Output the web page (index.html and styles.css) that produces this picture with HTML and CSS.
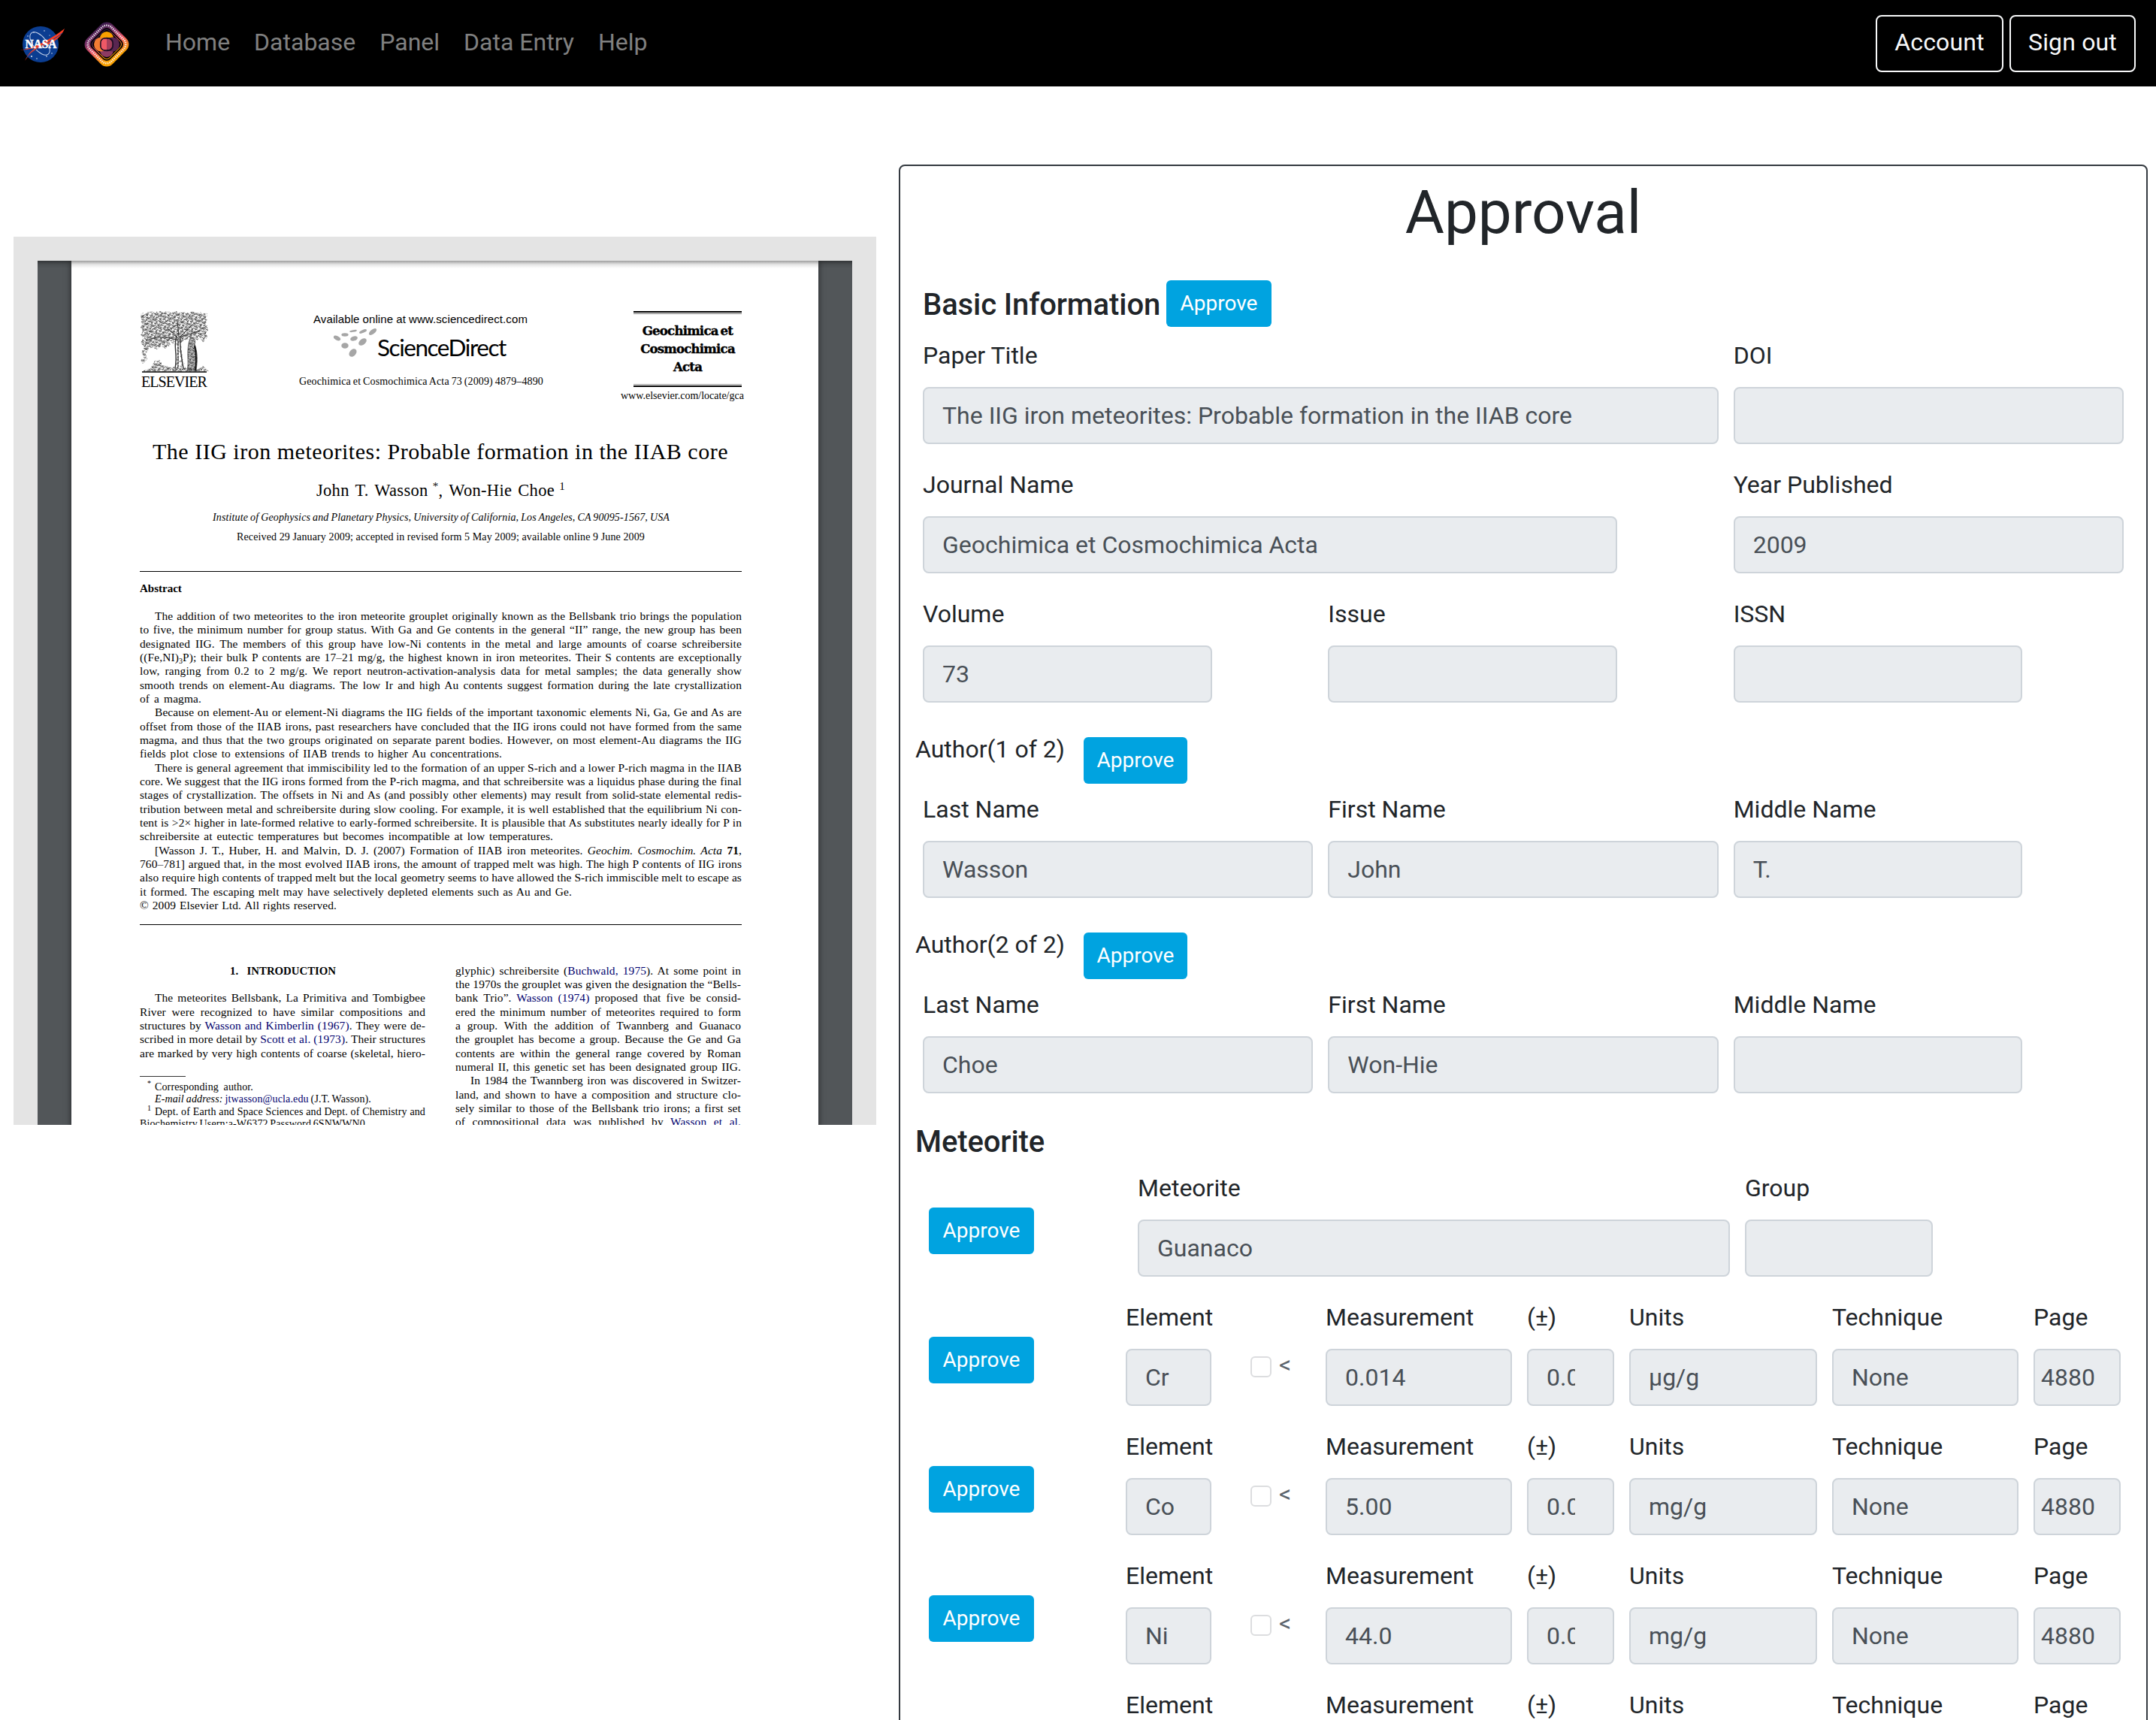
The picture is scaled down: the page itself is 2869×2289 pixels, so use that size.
FILE: index.html
```html
<!DOCTYPE html>
<html lang="en">
<head>
<meta charset="utf-8">
<title>Approval</title>
<link rel="stylesheet" href="styles.css">
</head>
<body>
<nav class="navbar">
  <svg class="logo-nasa" viewBox="0 0 60 48">
    <circle cx="28" cy="24" r="24" fill="#0b3d91"/>
    <g fill="#fff"><circle cx="19" cy="8" r=".8"/><circle cx="33" cy="6" r=".7"/><circle cx="11" cy="13" r=".7"/><circle cx="40" cy="12" r=".6"/><circle cx="16" cy="40" r=".9"/><circle cx="23" cy="43" r=".7"/><circle cx="36" cy="40" r=".8"/><circle cx="43" cy="36" r=".7"/></g>
    <ellipse cx="27" cy="23" rx="9" ry="18" transform="rotate(-38 27 23)" fill="none" stroke="#c9d6ee" stroke-width="1"/>
    <path d="M1 31C12 32 38 20 60 3C56 13 49 19 39 24C25 28 15 34 7 46C12 35 18 30 25 27C16 30 8 32 1 31Z" fill="#fc3d21"/>
    <path d="M9 42C20 28 44 20 57 9" fill="none" stroke="#0b3d91" stroke-width="1"/>
    <text x="28.500" y="29" text-anchor="middle" textLength="42" lengthAdjust="spacingAndGlyphs" class="nasa-word">NASA</text>
  </svg>
  <svg class="logo-psyche" viewBox="0 0 60 60">
    <defs>
      <linearGradient id="ring" x1="0" y1="0" x2="1" y2=".3"><stop offset="0" stop-color="#2b1745"/><stop offset=".35" stop-color="#7d3268"/><stop offset=".62" stop-color="#ef5966"/><stop offset="1" stop-color="#f9a000"/></linearGradient>
    </defs>
    <rect x="6" y="6" width="48" height="48" rx="11" transform="rotate(45 30 30)" fill="url(#ring)"/>
    <rect x="9.500" y="9.500" width="41" height="41" rx="9" transform="rotate(45 30 30)" fill="none" stroke="#fff" stroke-opacity=".85" stroke-width="2.600" stroke-dasharray="1.400 1.300"/>
    <rect x="12.500" y="12.500" width="35" height="35" rx="7" transform="rotate(45 30 30)" fill="#000"/>
    <rect x="14.500" y="14.500" width="31" height="31" rx="6" transform="rotate(45 30 30)" fill="none" stroke="url(#ring)" stroke-width="1"/>
    <circle cx="30" cy="22" r="9" fill="#f9a000"/><circle cx="30" cy="38" r="9" fill="#8d3a63"/>
    <circle cx="22.500" cy="30" r="9.500" fill="#f47c33"/><circle cx="37.500" cy="30" r="9.500" fill="#592651"/>
    <circle cx="30" cy="30" r="8.500" fill="#a53f5b" stroke="#1b0d24" stroke-width="1.300"/>
    <path d="M30 21.500a8.500 8.500 0 0 0 0 17Z" fill="#ef5966"/>
    <rect x="22" y="22" width="16" height="16" rx="5" fill="none" stroke="#1b0d24" stroke-width="1.300"/>
  </svg>
  <div class="links"><a>Home</a><a>Database</a><a>Panel</a><a>Data Entry</a><a>Help</a></div>
  <div class="account"><button class="btn-outline">Account</button><button class="btn-outline signout">Sign out</button></div>
</nav>
<main class="content">
  <section class="viewer">
    <div class="viewer-inner">
      <article class="page">
        <header class="masthead">
          <div class="elsevier">
            <svg class="tree" viewBox="0 0 92 82">
              <defs>
                <pattern id="leaf" width="9" height="8" patternUnits="userSpaceOnUse" patternTransform="rotate(17)"><path d="M0 1l2 2M3 0l-1 4M5 1l2 1l1-2M1 6l3-1M5 4l1 3M8 4l-2 1M3 7l2-1M7 7l2-1M0 4l1 1" stroke="#222" stroke-width=".9" fill="none"/></pattern>
                <pattern id="leaf2" width="7" height="11" patternUnits="userSpaceOnUse" patternTransform="rotate(-31)"><path d="M1 2q2 1 1 3M5 1q-2 2 0 3M3 7l2 2M0 9l2-2M6 7v3" stroke="#333" stroke-width=".9" fill="none"/></pattern>
              </defs>
              <path d="M2 3L6 5L10 1L14 4L18 1L23 3L28 0L33 3L38 1L43 3L48 0L54 3L60 1L65 3L70 0L75 3L80 1L85 4L90 3L87 8L90 12L87 17L91 24L88 29L90 35L84 42L80 36L76 39L70 34L64 38L60 36L54 42L46 38L38 42L37 48L33 50L29 46L22 52L18 48L12 50L8 57L10 64L4 70L1 66L5 60L2 54L6 48L1 42L6 36L1 32L4 27L1 22L4 16L1 11Z" fill="url(#leaf)"/>
              <path d="M2 3L10 1L28 0L60 2L90 3L88 14L91 24L89 35L70 34L54 42L37 48L12 47L4 60L5 48L1 38L6 32L1 22Z" fill="url(#leaf2)"/>
              <g fill="none" stroke="#333" stroke-linecap="round"><path d="M49 34C44 48 51 56 47 76M54 34C53 48 55 58 58 76" stroke-width="1.400"/><path d="M51 36L36 22M52 34L50 14M53 35L68 20M48 38C36 35 24 32 10 39M55 34L78 27" stroke-width="1"/><path d="M51 40v34" stroke-width="1.500" stroke-dasharray="2 2"/></g>
              <path d="M48 40h8c-2 12 2 25 6 38h-16c4-12 4-26 2-38Z" fill="url(#leaf2)"/>
              <path d="M67 36c5-3 8 3 6 8c4 10 4 22 2 35h-12c3-12-2-26 4-43Z" fill="#bbb"/><path d="M67 36c5-3 8 3 6 8c4 10 4 22 2 35h-12c3-12-2-26 4-43Z" fill="url(#leaf)" stroke="#222" stroke-width=".6"/>
              <path d="M73 46c3 12 2 22 1 33" stroke="#111" stroke-width="1.800" fill="none"/>
              <path d="M3 80L14 76L20 66L27 65L30 72L40 74L60 76L78 78L84 73L92 80Z" fill="url(#leaf)"/><path d="M3 81L16 77L22 70L27 68L30 75L60 76L84 75L92 81Z" fill="url(#leaf2)"/>
              <path d="M3 81H89" stroke="#000" stroke-width="1.600"/>
            </svg>
            <span class="elsevier-word">ELSEVIER</span>
          </div>
          <div class="direct">
            <p class="line available">Available online at www.sciencedirect.com</p>
            <div class="sd">
              <svg class="dots" viewBox="0 0 58 38" fill="#a6a6a6"><ellipse cx="4.500" cy="13" rx="5" ry="2.700" transform="rotate(25 4.500 13)"/><ellipse cx="15" cy="8.500" rx="4.600" ry="2.200"/><ellipse cx="26" cy="3.500" rx="5" ry="1.300" transform="rotate(-10 26 3.500)"/><ellipse cx="39" cy="4" rx="5.300" ry="2" transform="rotate(-22 39 4)"/><ellipse cx="52" cy="4.500" rx="6" ry="3" transform="rotate(-38 52 4.500)"/><ellipse cx="27" cy="13.500" rx="5" ry="3" transform="rotate(-18 27 13.500)"/><ellipse cx="38.500" cy="18" rx="6" ry="3.800" transform="rotate(-38 38.500 18)"/><ellipse cx="15" cy="23" rx="4.700" ry="3.800"/><ellipse cx="25.500" cy="32.500" rx="6" ry="4.200" transform="rotate(-50 25.500 32.500)"/></svg>
              <span class="sd-word">ScienceDirect</span>
            </div>
            <p class="line citation">Geochimica et Cosmochimica Acta 73 (2009) 4879–4890</p>
          </div>
          <div class="gca">
            <div class="gca-box"><span>Geochimica et</span><span>Cosmochimica</span><span>Acta</span></div>
            <p class="gca-url">www.elsevier.com/locate/gca</p>
          </div>
        </header>
        <h1 class="line paper-title">The IIG iron meteorites: Probable formation in the IIAB core</h1>
        <p class="line authors">John T. Wasson<sup> *</sup>, Won-Hie Choe<sup> 1</sup></p>
        <p class="line institute">Institute of Geophysics and Planetary Physics, University of California, Los Angeles, CA 90095-1567, USA</p>
        <p class="line received">Received 29 January 2009; accepted in revised form 5 May 2009; available online 9 June 2009</p>
        <div class="rule rule-top"></div>
        <h2 class="abstract-head">Abstract</h2>
        <div class="abstract">
          <p class="line indent">The addition of two meteorites to the iron meteorite grouplet originally known as the Bellsbank trio brings the population</p>
          <p class="line">to five, the minimum number for group status. With Ga and Ge contents in the general “II” range, the new group has been</p>
          <p class="line">designated IIG. The members of this group have low-Ni contents in the metal and large amounts of coarse schreibersite</p>
          <p class="line">((Fe,NI)<sub>3</sub>P); their bulk P contents are 17–21 mg/g, the highest known in iron meteorites. Their S contents are exceptionally</p>
          <p class="line">low, ranging from 0.2 to 2 mg/g. We report neutron-activation-analysis data for metal samples; the data generally show</p>
          <p class="line">smooth trends on element-Au diagrams. The low Ir and high Au contents suggest formation during the late crystallization</p>
          <p class="line w-82">of a magma.</p>
          <p class="line indent">Because on element-Au or element-Ni diagrams the IIG fields of the important taxonomic elements Ni, Ga, Ge and As are</p>
          <p class="line">offset from those of the IIAB irons, past researchers have concluded that the IIG irons could not have formed from the same</p>
          <p class="line">magma, and thus that the two groups originated on separate parent bodies. However, on most element-Au diagrams the IIG</p>
          <p class="line w-482">fields plot close to extensions of IIAB trends to higher Au concentrations.</p>
          <p class="line indent">There is general agreement that immiscibility led to the formation of an upper S-rich and a lower P-rich magma in the IIAB</p>
          <p class="line">core. We suggest that the IIG irons formed from the P-rich magma, and that schreibersite was a liquidus phase during the final</p>
          <p class="line">stages of crystallization. The offsets in Ni and As (and possibly other elements) may result from solid-state elemental redis-</p>
          <p class="line">tribution between metal and schreibersite during slow cooling. For example, it is well established that the equilibrium Ni con-</p>
          <p class="line">tent is &gt;2× higher in late-formed relative to early-formed schreibersite. It is plausible that As substitutes nearly ideally for P in</p>
          <p class="line w-550">schreibersite at eutectic temperatures but becomes incompatible at low temperatures.</p>
          <p class="line indent">[Wasson J. T., Huber, H. and Malvin, D. J. (2007) Formation of IIAB iron meteorites. <i>Geochim. Cosmochim. Acta</i> <b>71</b>,</p>
          <p class="line">760–781] argued that, in the most evolved IIAB irons, the amount of trapped melt was high. The high P contents of IIG irons</p>
          <p class="line">also require high contents of trapped melt but the local geometry seems to have allowed the S-rich immiscible melt to escape as</p>
          <p class="line w-575">it formed. The escaping melt may have selectively depleted elements such as Au and Ge.</p>
          <p class="line w-262">© 2009 Elsevier Ltd. All rights reserved.</p>
        </div>
        <div class="rule rule-bottom"></div>
        <div class="columns">
          <div class="column">
            <h2 class="line intro-head">1. INTRODUCTION</h2>
            <div class="intro">
              <p class="line indent">The meteorites Bellsbank, La Primitiva and Tombigbee</p>
              <p class="line">River were recognized to have similar compositions and</p>
              <p class="line">structures by <a>Wasson and Kimberlin (1967)</a>. They were de-</p>
              <p class="line">scribed in more detail by <a>Scott et al. (1973)</a>. Their structures</p>
              <p class="line">are marked by very high contents of coarse (skeletal, hiero-</p>
            </div>
            <div class="footnotes">
              <p class="line note w-131"><sup>*</sup>Corresponding author.</p>
              <p class="line note w-288"><i>E-mail address:</i> <a>jtwasson@ucla.edu</a> (J.T. Wasson).</p>
              <p class="line note w-360"><sup>1</sup>Dept. of Earth and Space Sciences and Dept. of Chemistry and</p>
              <p class="line w-300">Biochemistry Usern:a-W6372 Password 6SNWWN0</p>
            </div>
          </div>
          <div class="column">
            <p class="line">glyphic) schreibersite (<a>Buchwald, 1975</a>). At some point in</p>
            <p class="line">the 1970s the grouplet was given the designation the “Bells-</p>
            <p class="line">bank Trio”. <a>Wasson (1974)</a> proposed that five be consid-</p>
            <p class="line">ered the minimum number of meteorites required to form</p>
            <p class="line">a group. With the addition of Twannberg and Guanaco</p>
            <p class="line">the grouplet has become a group. Because the Ge and Ga</p>
            <p class="line">contents are within the general range covered by Roman</p>
            <p class="line">numeral II, this genetic set has been designated group IIG.</p>
            <p class="line indent">In 1984 the Twannberg iron was discovered in Switzer-</p>
            <p class="line">land, and shown to have a composition and structure clo-</p>
            <p class="line">sely similar to those of the Bellsbank trio irons; a first set</p>
            <p class="line">of compositional data was published by <a>Wasson et al.</a></p>
          </div>
        </div>
      </article>
    </div>
  </section>

  <section class="card">
    <h1 class="card-title">Approval</h1>
    <div class="basic-head"><h2 class="heading">Basic Information</h2><button class="btn">Approve</button></div>
    <div class="row">
      <div class="field c8"><label>Paper Title</label><div class="input">The IIG iron meteorites: Probable formation in the IIAB core</div></div>
      <div class="field c4"><label>DOI</label><div class="input"></div></div>
    </div>
    <div class="row">
      <div class="field c7"><label>Journal Name</label><div class="input">Geochimica et Cosmochimica Acta</div></div>
      <div class="field c4 at9"><label>Year Published</label><div class="input">2009</div></div>
    </div>
    <div class="row">
      <div class="field c3"><label>Volume</label><div class="input">73</div></div>
      <div class="field c3 at5"><label>Issue</label><div class="input"></div></div>
      <div class="field c3 at9"><label>ISSN</label><div class="input"></div></div>
    </div>
    <div class="author-head"><span>Author(1 of 2)</span><button class="btn">Approve</button></div>
    <div class="row">
      <div class="field c4"><label>Last Name</label><div class="input">Wasson</div></div>
      <div class="field c4"><label>First Name</label><div class="input">John</div></div>
      <div class="field c3"><label>Middle Name</label><div class="input">T.</div></div>
    </div>
    <div class="author-head"><span>Author(2 of 2)</span><button class="btn">Approve</button></div>
    <div class="row">
      <div class="field c4"><label>Last Name</label><div class="input">Choe</div></div>
      <div class="field c4"><label>First Name</label><div class="input">Won-Hie</div></div>
      <div class="field c3"><label>Middle Name</label><div class="input"></div></div>
    </div>
    <h2 class="heading meteorite-head">Meteorite</h2>
    <div class="meteorite-row">
      <button class="btn">Approve</button>
      <div class="field"><label>Meteorite</label><div class="input">Guanaco</div></div>
      <div class="field"><label>Group</label><div class="input"></div></div>
    </div>
    <div class="element-row">
      <button class="btn">Approve</button>
      <div class="field"><label>Element</label><div class="input">Cr</div></div>
      <div class="less"><span class="box"></span><span>&lt;</span></div>
      <div class="field"><label>Measurement</label><div class="input">0.014</div></div>
      <div class="field"><label>(±)</label><div class="input"><span class="clip-dev">0.00</span></div></div>
      <div class="field"><label>Units</label><div class="input">µg/g</div></div>
      <div class="field"><label>Technique</label><div class="input">None</div></div>
      <div class="field"><label>Page</label><div class="input page-no"><span class="clip-page">4880</span></div></div>
    </div>
    <div class="element-row">
      <button class="btn">Approve</button>
      <div class="field"><label>Element</label><div class="input">Co</div></div>
      <div class="less"><span class="box"></span><span>&lt;</span></div>
      <div class="field"><label>Measurement</label><div class="input">5.00</div></div>
      <div class="field"><label>(±)</label><div class="input"><span class="clip-dev">0.00</span></div></div>
      <div class="field"><label>Units</label><div class="input">mg/g</div></div>
      <div class="field"><label>Technique</label><div class="input">None</div></div>
      <div class="field"><label>Page</label><div class="input page-no"><span class="clip-page">4880</span></div></div>
    </div>
    <div class="element-row">
      <button class="btn">Approve</button>
      <div class="field"><label>Element</label><div class="input">Ni</div></div>
      <div class="less"><span class="box"></span><span>&lt;</span></div>
      <div class="field"><label>Measurement</label><div class="input">44.0</div></div>
      <div class="field"><label>(±)</label><div class="input"><span class="clip-dev">0.00</span></div></div>
      <div class="field"><label>Units</label><div class="input">mg/g</div></div>
      <div class="field"><label>Technique</label><div class="input">None</div></div>
      <div class="field"><label>Page</label><div class="input page-no"><span class="clip-page">4880</span></div></div>
    </div>
    <div class="element-row">
      <span></span>
      <div class="field"><label>Element</label></div>
      <span></span>
      <div class="field"><label>Measurement</label></div>
      <div class="field"><label>(±)</label></div>
      <div class="field"><label>Units</label></div>
      <div class="field"><label>Technique</label></div>
      <div class="field"><label>Page</label></div>
    </div>
  </section>
</main>
</body>
</html>
```
FILE: styles.css
```css
* { box-sizing: border-box; }
html, body { height: 2289px; overflow: hidden; }
body { margin: 0; background: #fff; color: #212529; font: 32px/48px Roboto, sans-serif; }
h1, h2, p { margin: 0; font-weight: 400; }
svg { display: block; flex: none; }
button { font-family: inherit; margin: 0; white-space: nowrap; }

/* Navigation */
.navbar { height: 115px; background: #000; display: flex; align-items: center; padding: 0 27px 0 26px; }
.logo-nasa { width: 60px; height: 48px; margin-top: 2px; }
.nasa-word { font: bold 16px "Liberation Serif", serif; fill: #fff; stroke: #fff; stroke-width: .5px; }
.logo-psyche { width: 60px; height: 60px; margin: 3px 0 0 26px; overflow: visible; }
.links { display: flex; gap: 32px; margin: -3px 0 0 48px; color: #808080; }
.account { display: flex; gap: 8px; margin-left: auto; }
.btn-outline { width: 170px; height: 76px; padding: 0 0 3px; background: none; border: 2px solid #f8f9fa; border-radius: 8px; color: #f8f9fa; font-size: 32px; line-height: 48px; letter-spacing: .15px; }
.signout { width: 168px; }

.content { display: flex; align-items: flex-start; height: 2174px; overflow: hidden; padding-left: 18px; }

/* Paper viewer */
.viewer { width: 1148px; height: 1182px; margin-top: 200px; padding: 32px 32px 0; background: #e4e4e4; }
.viewer-inner { position: relative; height: 1150px; padding: 0 45px; overflow: hidden; background: #525659; }
.viewer-inner::after { content: ""; position: absolute; inset: 0 0 auto 0; height: 10px; background: linear-gradient(rgba(0,0,0,.38), rgba(0,0,0,.1) 50%, rgba(0,0,0,0)); }
.page { height: 1200px; padding: 67px 102px 0 91px; background: #fff; color: #000; box-shadow: 0 0 8px rgba(0,0,0,.6); font: 15.400px/18.330px "Liberation Serif", serif; letter-spacing: .13px; }
.line { white-space: nowrap; text-align: justify; text-align-last: justify; word-spacing: -2px; }
.page a { color: #00006e; }
.page sup, .page sub { line-height: 0; font-size: 10px; }
.page sub { vertical-align: -3px; }
.masthead { display: flex; height: 122px; }
.elsevier { width: 212px; }
.tree { width: 92px; height: 82px; }
.elsevier-word { display: block; margin-left: 2px; font-size: 20px; line-height: 24px; letter-spacing: -.950px; }
.direct { width: 325px; }
.available { width: 285px; margin: 2px 0 0 19px; font-family: "Liberation Sans", sans-serif; font-size: 15px; letter-spacing: .1px; }
.sd { display: flex; height: 38px; margin: 3px 0 0 46px; }
.dots { width: 58px; height: 38px; }
.sd-word { margin: 7px 0 0; font: 31.500px/36px Lato, sans-serif; letter-spacing: -1.450px; }
.citation { width: 325px; margin-top: 24px; font-size: 14px; }
.gca { width: 161px; margin-left: auto; }
.gca-box { width: 144px; height: 101px; margin-left: 17px; padding-top: 14.500px; display: flex; flex-direction: column; align-items: center; background: linear-gradient(#000 1.500px, #fff 1.500px 3px, #777 3px 4px, #fff 4px 97px, #999 97px 98.500px, #fff 98.500px 99.500px, #000 99.500px); font: bold 16.500px/24.200px "DejaVu Serif", serif; letter-spacing: -.75px; white-space: nowrap; word-spacing: -2px; -webkit-text-stroke: .4px #000; }
.gca-url { width: 161px; margin-top: 3px; font-size: 14px; letter-spacing: 0; white-space: nowrap; }
.paper-title { width: 766px; margin: 46.500px 0 0 17px; font-size: 30px; line-height: 36px; letter-spacing: .5px; }
.authors { width: 331px; margin: 21px 0 0 235px; font-size: 22.500px; line-height: 26px; letter-spacing: .3px; }
.authors sup { font-size: 15px; }
.institute { width: 608px; margin: 14.500px 0 0 97px; font-size: 14px; line-height: 18px; font-style: italic; }
.received { width: 543px; margin: 7.500px 0 0 129px; font-size: 14px; line-height: 18px; }
.rule { height: 1px; background: #000; }
.rule-top { margin-top: 36.500px; }
.abstract-head { margin-top: 13px; font-size: 15px; line-height: 18px; font-weight: 700; letter-spacing: 0; }
.abstract { margin-top: 19px; }
.indent { padding-left: 20px; }
.rule-bottom { margin-top: 15.700px; }
.columns { display: flex; gap: 40px; margin-top: 51.800px; }
.column { width: 380px; }
.intro-head { width: 141px; margin-left: 120px; font-size: 14.800px; font-weight: 700; letter-spacing: 0; }
.intro { margin-top: 18.200px; }
.footnotes { margin-top: 21.500px; padding-top: 4px; font-size: 14px; line-height: 16.400px; }
.footnotes::before { content: ""; display: block; width: 61px; height: 1px; margin: -4px 0 5.500px; background: #333; }
.note { position: relative; margin-left: 20px; }
.note sup { position: absolute; left: -10px; top: 3px; }
.w-82 { width: 82px; }
.w-131 { width: 131px; }
.w-262 { width: 262px; }
.w-288 { width: 288px; }
.w-300 { width: 300px; }
.w-360 { width: 360px; }
.w-482 { width: 482px; }
.w-550 { width: 550px; }
.w-575 { width: 575px; }

/* Approval form */
.card { width: 1662px; height: 2200px; flex: none; margin: 104px 0 0 30px; padding: 14px 20px 0; border: 2px solid #343a40; border-radius: 8px; }
.card-title { text-align: center; font-size: 80px; line-height: 96px; }
.heading { font-size: 40px; line-height: 48px; font-weight: 500; letter-spacing: -.1px; }
.basic-head { display: flex; align-items: flex-start; gap: 8px; height: 78px; margin: 42px 0 0 10px; }
.basic-head .heading { margin-top: 9px; width: 316px; white-space: nowrap; }
.btn { width: 140px; height: 62px; padding: 0; background: #00a3e0; border: 0; border-radius: 6px; color: #fff; font-size: 28px; line-height: 42px; text-align: center; }
.row { display: grid; grid-template-columns: repeat(12, 1fr); height: 172px; }
.row .field { padding: 0 10px; }
.c3 { grid-column-end: span 3; }
.c4 { grid-column-end: span 4; }
.c7 { grid-column-end: span 7; }
.c8 { grid-column-end: span 8; }
.at5 { grid-column-start: 5; }
.at9 { grid-column-start: 9; }
label { display: block; height: 48px; margin-bottom: 16px; line-height: 45px; white-space: nowrap; }
.input { height: 76px; padding: 12px 24px; background: #e9ecef; border: 2px solid #ced4da; border-radius: 8px; color: #495057; white-space: nowrap; }
.author-head { display: flex; align-items: flex-start; height: 88px; padding-top: 6px; }
.author-head span { width: 224px; white-space: nowrap; }
.author-head .btn { width: 138px; margin-top: 8px; }
.meteorite-head { margin: 9px 0 15px; }
.meteorite-row, .element-row { display: grid; column-gap: 20px; height: 172px; padding-left: 18px; align-items: start; }
.meteorite-row { grid-template-columns: 258px 788px 250px; }
.element-row { grid-template-columns: 242px 114px 112px 248px 116px 250px 248px 116px; }
.meteorite-row > .btn, .element-row > .btn { margin-top: 48px; }
.less { display: flex; gap: 10px; padding: 74px 0 0 32px; font-size: 32px; line-height: 22px; color: #5b646c; }
.box { width: 28px; height: 28px; border: 2px solid #dcdddf; border-radius: 6px; background: #fff; }
.clip-dev, .clip-page { display: block; overflow: hidden; }
.clip-dev { width: 38px; }
.page-no { padding-left: 8px; }
.clip-page { width: 71px; }
```
